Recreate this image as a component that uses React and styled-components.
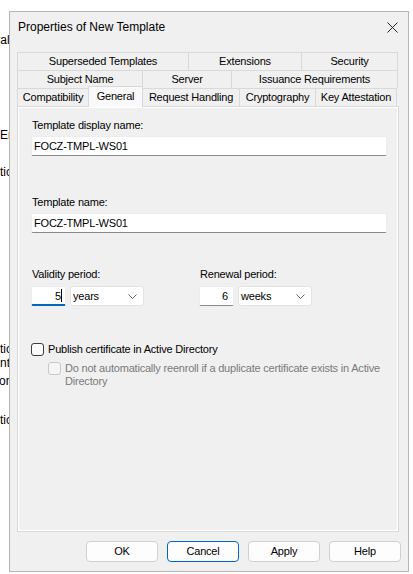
import React from 'react';
import styled, { createGlobalStyle } from 'styled-components';

const GlobalStyle = createGlobalStyle`
  html, body { margin: 0; padding: 0; background: #fff; }
  body {
    font-family: "Segoe UI", "Liberation Sans", Arial, sans-serif;
    color: #000;
  }
`;

// bits of the window behind the dialog, cut by the screen edge
const BACK_TEXT = [
  { text: 'General', gap: 33, shift: -33 },
  { text: 'Enroll', gap: 81, shift: 0 },
  { text: 'tication', gap: 23, shift: 0 },
  { text: 'tication', gap: 163, shift: 0 },
  { text: 'nt', gap: 0, shift: 0 },
  { text: 'on', gap: 4, shift: -1 },
  { text: 'tication', gap: 25, shift: 0 },
];

const TAB_ROWS = [
  [
    { label: 'Superseded Templates', w: 172 },
    { label: 'Extensions', w: 114 },
    { label: 'Security', w: 97 },
  ],
  [
    { label: 'Subject Name', w: 126 },
    { label: 'Server', w: 90 },
    { label: 'Issuance Requirements', w: 167 },
  ],
  [
    { label: 'Compatibility', w: 72 },
    { label: 'General', w: 55, active: true },
    { label: 'Request Handling', w: 98 },
    { label: 'Cryptography', w: 77 },
    { label: 'Key Attestation', w: 82 },
  ],
];

const Chevron = () => (
  <svg width="9" height="5" viewBox="0 0 9 5">
    <path d="M0.5 0.5 L4.5 4.5 L8.5 0.5" fill="none" stroke="#666" strokeWidth="1" />
  </svg>
);

const CloseIcon = () => (
  <svg width="11" height="11" viewBox="0 0 11 11">
    <path d="M0.5 0.5 L10.5 10.5 M10.5 0.5 L0.5 10.5" stroke="#222" strokeWidth="1" />
  </svg>
);

function Period({ label, value, unit, focused }) {
  return (
    <div>
      <Label>{label}</Label>
      <PeriodRow>
        <Spin $focused={focused}>
          {value}
          {focused && <Caret />}
        </Spin>
        <Dropdown>
          <span>{unit}</span>
          <Chevron />
        </Dropdown>
      </PeriodRow>
    </div>
  );
}

export default function App() {
  return (
    <>
      <GlobalStyle />
      <Screen>
        <Backdrop>
          {BACK_TEXT.map((b, i) => (
            <BackLine key={i} $gap={b.gap} $shift={b.shift}>{b.text}</BackLine>
          ))}
        </Backdrop>

        <Dialog>
          <TitleBar>
            <Title>Properties of New Template</Title>
            <CloseButton><CloseIcon /></CloseButton>
          </TitleBar>

          <TabControl>
            {TAB_ROWS.map((row, i) => (
              <TabRow key={i}>
                {row.map((t) => (
                  <Tab key={t.label} $w={t.w} $active={t.active}>{t.label}</Tab>
                ))}
              </TabRow>
            ))}
            <Panel>
              <Label>Template display name:</Label>
              <TextBox>FOCZ-TMPL-WS01</TextBox>

              <Label $top={39}>Template name:</Label>
              <TextBox>FOCZ-TMPL-WS01</TextBox>

              <Periods>
                <Period label="Validity period:" value="5" unit="years" focused />
                <Period label="Renewal period:" value="6" unit="weeks" />
              </Periods>

              <CheckRow $top={37}>
                <Box />
                <span>Publish certificate in Active Directory</span>
              </CheckRow>
              <CheckRow $top={6} $indent={17} $disabled>
                <Box $disabled />
                <span>Do not automatically reenroll if a duplicate certificate exists in Active Directory</span>
              </CheckRow>
            </Panel>
          </TabControl>

          <ButtonBar>
            <Button>OK</Button>
            <Button $focused>Cancel</Button>
            <Button>Apply</Button>
            <Button>Help</Button>
          </ButtonBar>
        </Dialog>
      </Screen>
    </>
  );
}

const Screen = styled.div`
  display: flex;
  width: 413px;
  height: 574px;
  overflow: hidden;
`;

const Backdrop = styled.div`
  width: 9px;
  flex: none;
  overflow: hidden;
  font-size: 12px;
`;

const BackLine = styled.div`
  height: 14px;
  line-height: 14px;
  margin-top: ${p => p.$gap}px;
  margin-left: ${p => p.$shift}px;
  white-space: nowrap;
`;

const Dialog = styled.div`
  margin-top: 11px;
  width: 400px;
  height: 561px;
  box-sizing: border-box;
  border: 1px solid #b5b5b5;
  background: #f0f0f0;
  display: flex;
  flex-direction: column;
  flex: none;
`;

const TitleBar = styled.div`
  height: 30px;
  display: flex;
  align-items: center;
  justify-content: space-between;
  padding-left: 8px;
`;

const Title = styled.div`
  font-size: 12px;
`;

const CloseButton = styled.div`
  width: 31px;
  height: 30px;
  display: flex;
  align-items: center;
  justify-content: center;
`;

const TabControl = styled.div`
  margin: 10px 9px 0 7px;
  display: flex;
  flex-direction: column;
  font-size: 11px;
  letter-spacing: -0.2px;
`;

const TabRow = styled.div`
  display: flex;
  align-items: flex-end;
  height: 18px;
`;

const Tab = styled.div`
  width: ${p => p.$w}px;
  margin-left: -1px;
  box-sizing: border-box;
  border: 1px solid #d9d9d9;
  border-bottom: none;
  background: ${p => (p.$active ? '#f9f9f9' : '#f0f0f0')};
  text-align: center;
  white-space: nowrap;
  height: ${p => (p.$active ? 21 : 18)}px;
  line-height: ${p => (p.$active ? 18 : 17)}px;
  margin-bottom: ${p => (p.$active ? -1 : 0)}px;
  position: ${p => (p.$active ? 'relative' : 'static')};
  z-index: ${p => (p.$active ? 1 : 'auto')};
  &:first-child { margin-left: 0; }
`;

const Panel = styled.div`
  width: 382px;
  height: 426px;
  box-sizing: border-box;
  border: 1px solid #d9d9d9;
  box-shadow: inset 1px 1px 0 #fff, inset -1px -1px 0 #fff;
  background: #f0f0f0;
  padding: 11px 11px 0 13px;
`;

const Label = styled.div`
  line-height: 14px;
  padding-left: 1px;
  margin-top: ${p => p.$top || 0}px;
`;

const TextBox = styled.div`
  margin-top: 4px;
  height: 20px;
  box-sizing: border-box;
  background: #fff;
  border: 1px solid #ececec;
  border-bottom-color: #8a8a8a;
  border-radius: 2px;
  padding-left: 2px;
  line-height: 18px;
`;

const Periods = styled.div`
  margin-top: 34px;
  display: grid;
  grid-template-columns: 168px auto;
`;

const PeriodRow = styled.div`
  margin-top: 5px;
  display: flex;
  gap: 4px;
`;

const Spin = styled.div`
  width: 35px;
  height: 20px;
  box-sizing: border-box;
  background: #fff;
  border: 1px solid #ececec;
  border-bottom: ${p => (p.$focused ? '2px solid #0067c0' : '1px solid #8a8a8a')};
  border-radius: 2px;
  padding-right: ${p => (p.$focused ? 3 : 5)}px;
  line-height: 18px;
  display: flex;
  justify-content: flex-end;
  align-items: center;
`;

const Caret = styled.span`
  width: 1px;
  height: 13px;
  background: #000;
`;

const Dropdown = styled.div`
  width: 74px;
  height: 20px;
  box-sizing: border-box;
  background: #fff;
  border: 1px solid #e3e3e3;
  border-radius: 3px;
  display: flex;
  align-items: center;
  justify-content: space-between;
  padding: 0 6px 0 2px;
`;

const CheckRow = styled.div`
  margin-top: ${p => p.$top}px;
  margin-left: ${p => p.$indent || 0}px;
  display: flex;
  align-items: flex-start;
  gap: 4px;
  line-height: 13px;
  color: ${p => (p.$disabled ? '#7a7a7a' : '#000')};
  padding-right: 4px;
`;

const Box = styled.span`
  flex: none;
  width: 13px;
  height: 13px;
  box-sizing: border-box;
  border: 1px solid ${p => (p.$disabled ? '#c8c8c8' : '#3c3c3c')};
  border-radius: 3px;
  background: ${p => (p.$disabled ? '#f5f5f5' : '#fbfbfb')};
`;

const ButtonBar = styled.div`
  margin-top: 9px;
  padding-right: 7px;
  display: flex;
  justify-content: flex-end;
  gap: 9px;
`;

const Button = styled.div`
  width: 72px;
  height: 21px;
  box-sizing: border-box;
  border: 1px solid ${p => (p.$focused ? '#0067c0' : '#d0d0d0')};
  border-radius: 4px;
  background: #fdfdfd;
  font-size: 11px;
  letter-spacing: -0.2px;
  text-align: center;
  line-height: 19px;
`;
